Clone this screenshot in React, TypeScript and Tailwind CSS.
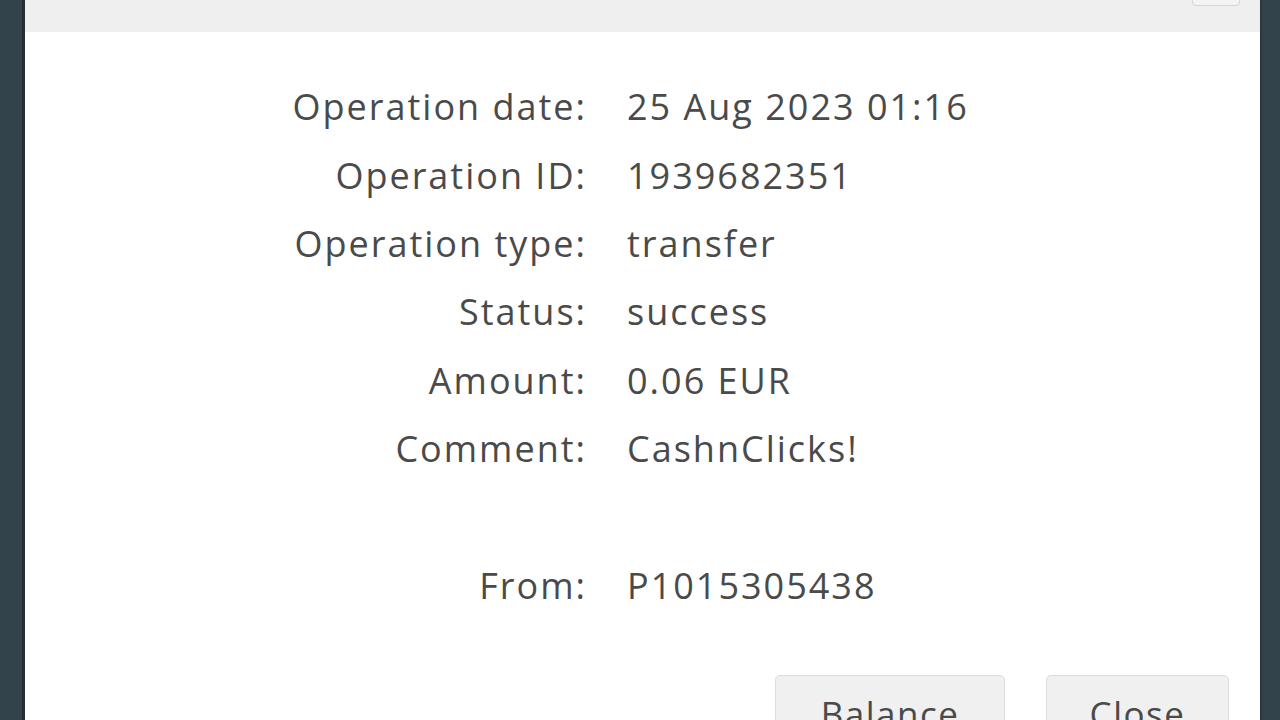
import React from "react";

const rows: [string, string][] = [
  ["Operation date:", "25 Aug 2023 01:16"],
  ["Operation ID:", "1939682351"],
  ["Operation type:", "transfer"],
  ["Status:", "success"],
  ["Amount:", "0.06 EUR"],
  ["Comment:", "CashnClicks!"],
  ["", ""],
  ["From:", "P1015305438"],
];

export default function App() {
  return (
    <div
      className="w-[1280px] h-[720px] overflow-hidden bg-[#33434b] flex"
      style={{ fontFamily: '"Open Sans", "Liberation Sans", sans-serif' }}
    >
      <div className="w-[25px] shrink-0 border-r-[3px] border-[#262f35]" />
      <div className="w-[1235px] shrink-0 bg-white flex flex-col shadow-[1px_0_2px_rgba(0,0,0,0.3)]">
        <div className="h-[32px] bg-[#efefef] flex justify-end pr-[20px] shrink-0">
          <div className="w-[48px] h-[36px] -mt-[30px] rounded-[4px] border border-[#d6d6d6] bg-[#f4f4f4]" />
        </div>
        <div className="grid grid-cols-[562px_1fr] gap-x-[40px] pt-[41px] text-[#4a4a4a] text-[36px] tracking-[2px]">
          {rows.map(([l, v], i) => (
            <React.Fragment key={i}>
              <div className="h-[68.4px] flex items-center justify-end">{l}</div>
              <div className="h-[68.4px] flex items-center">{v}</div>
            </React.Fragment>
          ))}
        </div>
        <div className="flex justify-end gap-[41px] pr-[31px] pt-[55px]">
          <button className="w-[230px] h-[64px] rounded-[5px] border border-[#dcdcdc] bg-[#f0f0f0] text-[#4a4a4a] text-[35px] tracking-[1.5px] flex items-start justify-center pt-[12px]">
            Balance
          </button>
          <button className="w-[183px] h-[64px] rounded-[5px] border border-[#dcdcdc] bg-[#f0f0f0] text-[#4a4a4a] text-[35px] tracking-[1.5px] flex items-start justify-center pt-[12px]">
            Close
          </button>
        </div>
      </div>
    </div>
  );
}
